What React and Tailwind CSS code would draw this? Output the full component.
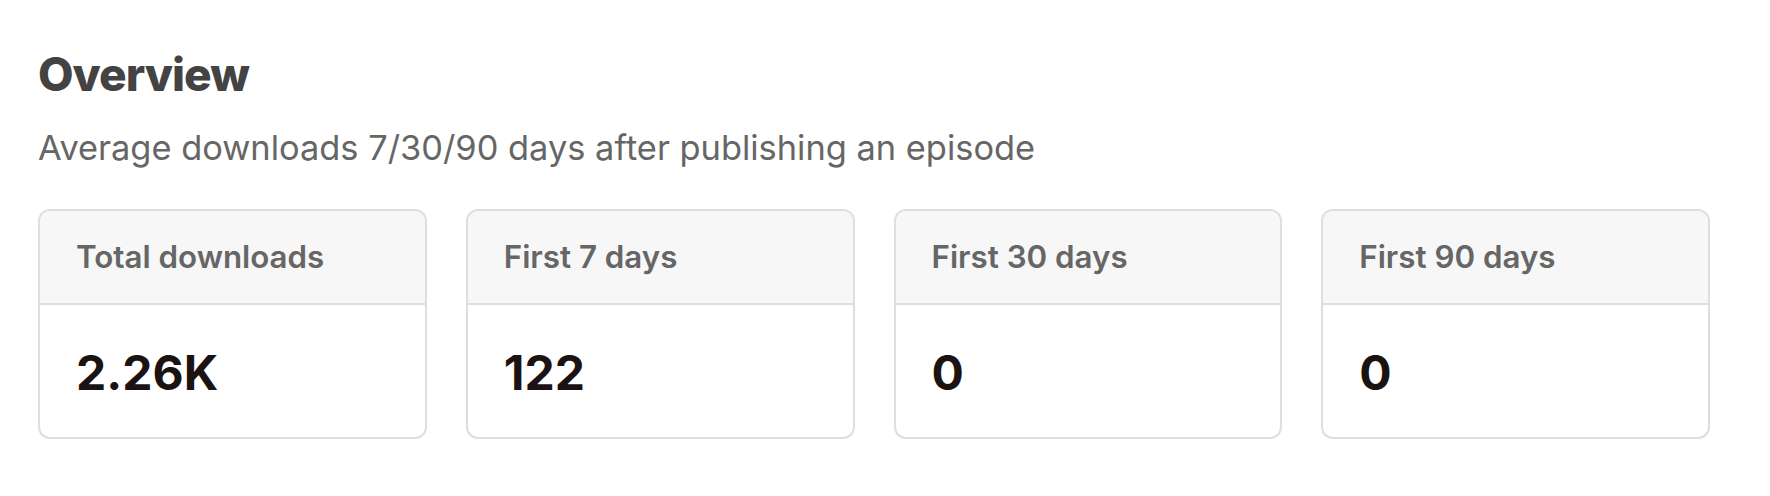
export default function App() {
  const stats = [
    { label: "Total downloads", value: "2.26K" },
    { label: "First 7 days", value: "122" },
    { label: "First 30 days", value: "0" },
    { label: "First 90 days", value: "0" },
  ];
  return (
    <div
      className="w-[1770px] h-[496px] bg-white pl-[38px] pr-[60px] pt-[46px]"
      style={{ fontFamily: "Inter, 'Noto Sans', sans-serif" }}
    >
      <h1 className="text-[46px] leading-[56px] font-extrabold text-[#434343] tracking-[-1px]">Overview</h1>
      <p className="mt-[25px] text-[34.4px] leading-[42px] text-[#666666]">
        Average downloads 7/30/90 days after publishing an episode
      </p>
      <div className="mt-[40px] grid grid-cols-4 gap-[39px]">
        {stats.map((s) => (
          <div
            key={s.label}
            className="rounded-[12px] border-2 border-[#dedede] overflow-hidden bg-white"
          >
            <div className="h-[94px] flex items-center px-[36px] bg-[#f7f7f7] border-b-2 border-[#dedede]">
              <span className="text-[31.3px] font-semibold text-[#666666]">{s.label}</span>
            </div>
            <div className="h-[132px] flex items-center px-[36px] pt-[4px]">
              <span className="text-[48px] font-bold text-[#1a1311]">{s.value}</span>
            </div>
          </div>
        ))}
      </div>
    </div>
  );
}
